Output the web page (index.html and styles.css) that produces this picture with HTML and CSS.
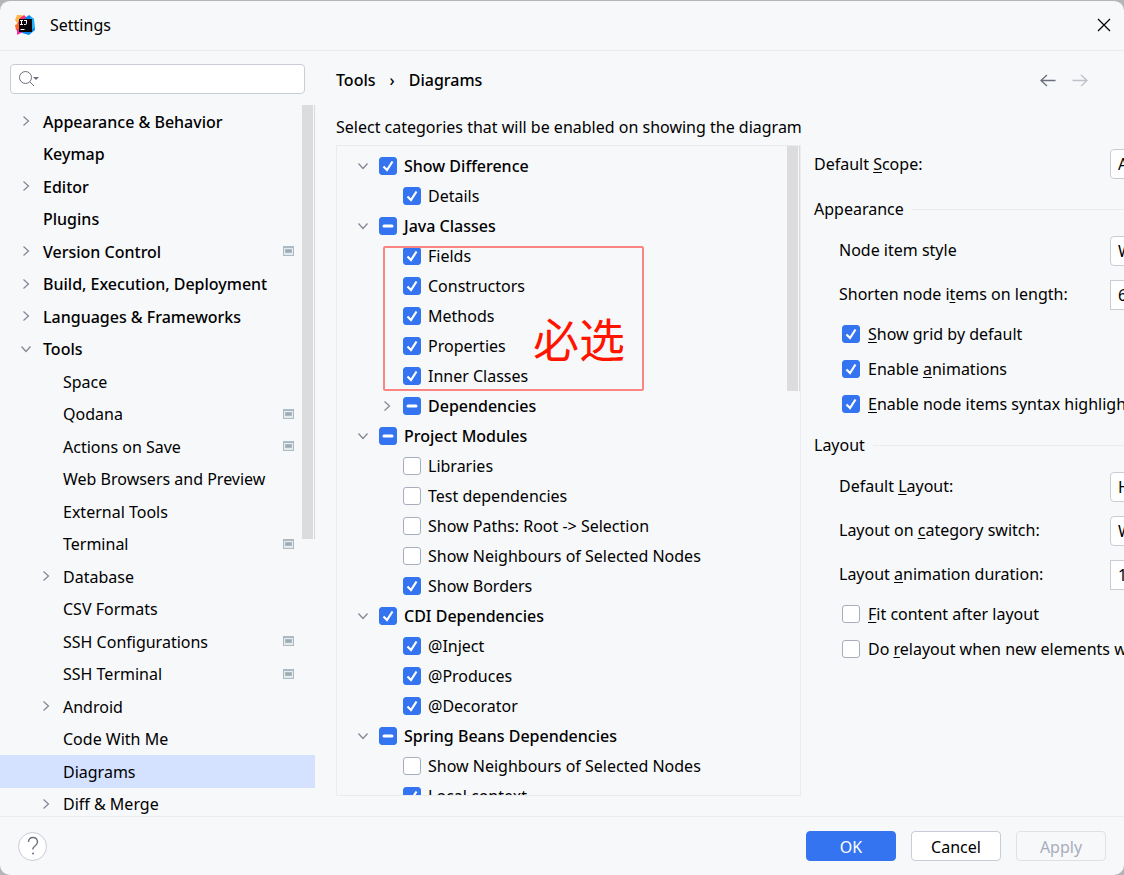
FILE: index.html
```
<!DOCTYPE html>
<html lang="en">
<head>
    <meta charset="UTF-8">
    <meta name="viewport" content="width=device-width, initial-scale=1.0">
    <title>Settings</title>
    <link rel="stylesheet" href="styles.css">
</head>
<body>
    <svg class="sprite" aria-hidden="true">
        <symbol id="right" viewBox="0 0 16 16"><path d="M5.5 3.5l5 4.5-5 4.5" /></symbol>
        <symbol id="down" viewBox="0 0 16 16"><path d="M3.5 5.5l4.5 5 4.5-5" /></symbol>
        <symbol id="project" viewBox="0 0 11 10">
            <rect width="11" height="10" fill="#aebac1" />
            <rect x="1" y="2" width="9" height="7" fill="#e4eaed" />
            <rect x="2" y="3" width="7" height="4" fill="#aebac1" />
            <rect x="3" y="4" width="5" height="2" fill="#9caab2" />
        </symbol>
    </svg>

    <div class="window">
        <header class="titlebar">
            <svg class="logo" viewBox="0 0 20 20">
                <path d="M0 5l2-5h5l2 5-4 7-5-1 2-3z" fill="#ffb84a" />
                <path d="M5 3l4-3 4 4-6 8-6 2 2-6z" fill="#fe2d7c" />
                <path d="M0 10l4-1 6 6-2 3-7-3z" fill="#ff6a2b" />
                <path d="M2 14l4 0 5 3-5 1-4 2z" fill="#f02fa8" />
                <path d="M10 3l4-3 5 4 1 11-6 5-7-2z" fill="#0a86f6" />
                <path d="M15 2l4 2v9l-3 2z" fill="#17b4fa" />
                <rect x="4" y="4" width="13" height="13" fill="#0b0509" />
                <path d="M5 5.500h3M6.500 5.500v4M5 9.500h3M9 5.500h3M11.500 5.500v3q0 1-1 1H9M5.500 14.500h4" fill="none" stroke="#fff" />
            </svg>
            <h1>Settings</h1>
            <button class="icon-btn close" aria-label="Close">
                <svg viewBox="0 0 14 14"><path d="M1 1l12 12M13 1L1 13" /></svg>
            </button>
        </header>

        <div class="content">
            <aside class="sidebar">
                <div class="search">
                    <svg viewBox="0 0 22 18">
                        <circle cx="7.500" cy="7.500" r="6" fill="none" stroke="#6c707e" />
                        <path d="M12 12l4 4" stroke="#6c707e" />
                        <path d="M15 7h6l-3 3z" fill="#6c707e" />
                    </svg>
                    <input type="text" aria-label="Search settings">
                </div>
                <div class="nav-wrap">
                    <ul class="nav">
                        <li class="group"><svg class="chevron"><use href="#right" /></svg><a href="#">Appearance &amp; Behavior</a></li>
                        <li class="group"><span class="chevron"></span><a href="#">Keymap</a></li>
                        <li class="group"><svg class="chevron"><use href="#right" /></svg><a href="#">Editor</a></li>
                        <li class="group"><span class="chevron"></span><a href="#">Plugins</a></li>
                        <li class="group"><svg class="chevron"><use href="#right" /></svg><a href="#">Version Control</a><svg class="project"><use href="#project" /></svg></li>
                        <li class="group"><svg class="chevron"><use href="#right" /></svg><a href="#">Build, Execution, Deployment</a></li>
                        <li class="group"><svg class="chevron"><use href="#right" /></svg><a href="#">Languages &amp; Frameworks</a></li>
                        <li class="group"><svg class="chevron"><use href="#down" /></svg><a href="#">Tools</a></li>
                        <li class="child"><span class="chevron"></span><a href="#">Space</a></li>
                        <li class="child"><span class="chevron"></span><a href="#">Qodana</a><svg class="project"><use href="#project" /></svg></li>
                        <li class="child"><span class="chevron"></span><a href="#">Actions on Save</a><svg class="project"><use href="#project" /></svg></li>
                        <li class="child"><span class="chevron"></span><a href="#">Web Browsers and Preview</a></li>
                        <li class="child"><span class="chevron"></span><a href="#">External Tools</a></li>
                        <li class="child"><span class="chevron"></span><a href="#">Terminal</a><svg class="project"><use href="#project" /></svg></li>
                        <li class="child"><svg class="chevron"><use href="#right" /></svg><a href="#">Database</a></li>
                        <li class="child"><span class="chevron"></span><a href="#">CSV Formats</a></li>
                        <li class="child"><span class="chevron"></span><a href="#">SSH Configurations</a><svg class="project"><use href="#project" /></svg></li>
                        <li class="child"><span class="chevron"></span><a href="#">SSH Terminal</a><svg class="project"><use href="#project" /></svg></li>
                        <li class="child"><svg class="chevron"><use href="#right" /></svg><a href="#">Android</a></li>
                        <li class="child"><span class="chevron"></span><a href="#">Code With Me</a></li>
                        <li class="child selected"><span class="chevron"></span><a href="#">Diagrams</a></li>
                        <li class="child"><svg class="chevron"><use href="#right" /></svg><a href="#">Diff &amp; Merge</a></li>
                    </ul>
                    <div class="scrollbar nav-scroll"></div>
                </div>
            </aside>

            <main class="page">
                <div class="page-head">
                    <nav class="breadcrumb">
                        <a href="#">Tools</a>
                        <span>›</span>
                        <a href="#">Diagrams</a>
                    </nav>
                    <div class="history">
                        <button class="icon-btn" aria-label="Back"><svg viewBox="0 0 16 16"><path d="M15.500 8.500H1M7 3L1 8.500 7 14" /></svg></button>
                        <button class="icon-btn" aria-label="Forward" disabled><svg viewBox="0 0 16 16"><path d="M.5 8.500H15M9 3l6 5.500L9 14" /></svg></button>
                    </div>
                </div>

                <p class="intro">Select categories that will be enabled on showing the diagram</p>

                <div class="columns">
                    <div class="tree-box">
                        <ul class="tree">
                            <li class="root"><svg class="chevron"><use href="#down" /></svg><label><input type="checkbox" checked>Show Difference</label></li>
                            <li class="leaf"><label><input type="checkbox" checked>Details</label></li>
                            <li class="root"><svg class="chevron"><use href="#down" /></svg><label><input type="checkbox" class="mixed">Java Classes</label></li>
                            <li class="leaf"><label><input type="checkbox" checked>Fields</label></li>
                            <li class="leaf"><label><input type="checkbox" checked>Constructors</label></li>
                            <li class="leaf"><label><input type="checkbox" checked>Methods</label></li>
                            <li class="leaf"><label><input type="checkbox" checked>Properties</label></li>
                            <li class="leaf"><label><input type="checkbox" checked>Inner Classes</label></li>
                            <li class="root nested"><svg class="chevron"><use href="#right" /></svg><label><input type="checkbox" class="mixed">Dependencies</label></li>
                            <li class="root"><svg class="chevron"><use href="#down" /></svg><label><input type="checkbox" class="mixed">Project Modules</label></li>
                            <li class="leaf"><label><input type="checkbox">Libraries</label></li>
                            <li class="leaf"><label><input type="checkbox">Test dependencies</label></li>
                            <li class="leaf"><label><input type="checkbox">Show Paths: Root -&gt; Selection</label></li>
                            <li class="leaf"><label><input type="checkbox">Show Neighbours of Selected Nodes</label></li>
                            <li class="leaf"><label><input type="checkbox" checked>Show Borders</label></li>
                            <li class="root"><svg class="chevron"><use href="#down" /></svg><label><input type="checkbox" checked>CDI Dependencies</label></li>
                            <li class="leaf"><label><input type="checkbox" checked>@Inject</label></li>
                            <li class="leaf"><label><input type="checkbox" checked>@Produces</label></li>
                            <li class="leaf"><label><input type="checkbox" checked>@Decorator</label></li>
                            <li class="root"><svg class="chevron"><use href="#down" /></svg><label><input type="checkbox" class="mixed">Spring Beans Dependencies</label></li>
                            <li class="leaf"><label><input type="checkbox">Show Neighbours of Selected Nodes</label></li>
                            <li class="leaf"><label><input type="checkbox" checked>Local context</label></li>
                        </ul>
                        <div class="scrollbar tree-scroll"></div>
                        <div class="note" lang="zh-CN">必选</div>
                    </div>

                    <form class="options">
                        <div class="field scope">
                            <label for="scope">Default <u>S</u>cope:</label>
                            <select id="scope"><option>All</option></select>
                        </div>

                        <h2>Appearance</h2>
                        <div class="section">
                            <div class="field">
                                <label for="node-style">Node item style</label>
                                <select id="node-style"><option>With icons</option></select>
                            </div>
                            <div class="field">
                                <label for="shorten">Shorten node i<u>t</u>ems on length:</label>
                                <input type="text" id="shorten" value="60">
                            </div>
                            <label class="check"><input type="checkbox" checked><span><u>S</u>how grid by default</span></label>
                            <label class="check"><input type="checkbox" checked><span>Enable <u>a</u>nimations</span></label>
                            <label class="check"><input type="checkbox" checked><span><u>E</u>nable node items syntax highlighting</span></label>
                        </div>

                        <h2>Layout</h2>
                        <div class="section">
                            <div class="field">
                                <label for="layout">Default <u>L</u>ayout:</label>
                                <select id="layout"><option>Hierarchic</option></select>
                            </div>
                            <div class="field">
                                <label for="switch">Layout on <u>c</u>ategory switch:</label>
                                <select id="switch"><option>Whole graph</option></select>
                            </div>
                            <div class="field">
                                <label for="duration">Layout <u>a</u>nimation duration:</label>
                                <input type="text" id="duration" value="100">
                            </div>
                            <label class="check"><input type="checkbox"><span><u>F</u>it content after layout</span></label>
                            <label class="check"><input type="checkbox"><span>Do <u>r</u>elayout when new elements were added</span></label>
                        </div>
                    </form>
                </div>
            </main>
        </div>

        <footer class="footer">
            <button class="help" aria-label="Help">
                <svg viewBox="0 0 12 20"><path d="M1.500 6Q1.500 1.500 6 1.500T10.500 6Q10.500 8 8 10T6 13.500" fill="none" stroke="#6c707e" stroke-width="1.400" /><circle cx="6" cy="17.500" r="1" fill="#6c707e" /></svg>
            </button>
            <div class="actions">
                <button class="btn primary">OK</button>
                <button class="btn">Cancel</button>
                <button class="btn" disabled>Apply</button>
            </div>
        </footer>
    </div>

    <script>
        document.querySelectorAll('.mixed').forEach(box => {
            box.indeterminate = true;
        });
    </script>
</body>
</html>
```
FILE: styles.css
```
* {
    box-sizing: border-box;
}
body {
    margin: 0;
    height: 100vh;
    overflow: hidden;
    background-color: #b4b5b8;
    font-family: "Noto Sans", "Open Sans", "Noto Sans CJK SC", sans-serif;
    font-size: 16px;
    line-height: 24px;
    color: #000;
}
ul {
    list-style: none;
    margin: 0;
    padding: 0;
}
a {
    color: inherit;
    text-decoration: none;
}
input, select, button {
    font: inherit;
    color: inherit;
    margin: 0;
}
u {
    text-underline-offset: 2px;
    text-decoration-thickness: 1px;
    text-decoration-skip-ink: none;
}
.sprite {
    display: none;
}
.window {
    display: flex;
    flex-direction: column;
    height: 100vh;
    border-top: 1px solid #b4b5b8;
    border-radius: 10px;
    background-color: #f7f8fa;
    overflow: hidden;
}

/* title bar */
.titlebar {
    display: flex;
    align-items: center;
    gap: 15px;
    height: 50px;
    padding: 0 13px 2px 15px;
    border-bottom: 1px solid #ebecf0;
}
.titlebar h1 {
    flex: 1;
    margin: 0;
    font-size: 16px;
    font-weight: 400;
}
.logo {
    width: 20px;
    height: 20px;
}
.icon-btn {
    display: flex;
    padding: 0;
    border: none;
    background: none;
}
.icon-btn svg {
    width: 16px;
    height: 16px;
    fill: none;
    stroke: #6c707e;
    stroke-width: 1.3;
}
.icon-btn:disabled {
    opacity: 0.4;
}
.icon-btn.close svg {
    width: 14px;
    height: 14px;
    stroke: #000;
    stroke-width: 1.2;
}
.content {
    display: flex;
    flex: 1;
    min-height: 0;
}

/* left navigation */
.sidebar {
    display: flex;
    flex-direction: column;
    flex: 0 0 315px;
}
.search {
    display: flex;
    align-items: center;
    gap: 4px;
    height: 30px;
    margin: 13px 10px 11px;
    padding: 0 8px 0 7px;
    border: 1px solid #c9ccd6;
    border-radius: 4px;
    background-color: #fff;
}
.search svg {
    flex: none;
    width: 22px;
    height: 18px;
}
.search input {
    flex: 1;
    min-width: 0;
    border: none;
    outline: none;
    background: none;
}
.nav-wrap {
    position: relative;
    display: flex;
    flex: 1;
    min-height: 0;
    overflow: hidden;
}
.nav {
    flex: 1;
    display: grid;
    grid-auto-rows: 1fr;
    margin-bottom: -4px;
}
.nav li {
    display: flex;
    align-items: center;
    gap: 9px;
    min-height: 0;
    padding: 0 21px 0 18px;
}
.nav li.child {
    padding-left: 38px;
}
.nav a {
    flex: 1;
    padding-top: 1px;
    white-space: nowrap;
}
.group {
    font-weight: 500;
}
.nav .selected {
    background-color: #d4e2ff;
}
.chevron {
    flex: none;
    width: 16px;
    height: 16px;
    fill: none;
    stroke: #818594;
    stroke-width: 1.2;
}
.project {
    width: 11px;
    height: 10px;
}
.scrollbar {
    position: absolute;
    top: 0;
    width: 11px;
    background-color: #dcdcde;
}
.nav-scroll {
    right: 2px;
    height: 61%;
    box-shadow: 1px 0 #f7f8fa, 2px 0 #d8d9dd;
}

/* settings page */
.page {
    display: flex;
    flex-direction: column;
    flex: 1;
    min-width: 0;
    padding: 17px 0 20px 21px;
}
.page-head {
    display: flex;
    justify-content: space-between;
    padding-right: 36px;
}
.breadcrumb {
    display: flex;
    gap: 14px;
    font-weight: 500;
}
.history {
    display: flex;
    align-items: center;
    gap: 16px;
}
.intro {
    margin: 23px 0 6px;
    white-space: nowrap;
}
.columns {
    display: flex;
    flex: 1;
    gap: 13px;
    min-height: 0;
    overflow: hidden;
}
.tree-box {
    position: relative;
    flex: 0 0 465px;
    padding-top: 5px;
    border: 1px solid #ebecf0;
    overflow: hidden;
}
.tree li {
    display: flex;
    align-items: center;
    gap: 8px;
    height: 30px;
    padding-left: 18px;
}
.tree .root {
    font-weight: 500;
}
.tree .nested {
    padding-left: 42px;
}
.tree .leaf {
    padding-left: 66px;
}
.tree label {
    display: flex;
    align-items: center;
    gap: 7px;
}
.tree-scroll {
    right: 2px;
    height: 245px;
    box-shadow: 1px 0 #f7f8fa, 2px 0 #d8d9dd;
}
.note {
    position: absolute;
    top: 100px;
    left: 46px;
    display: flex;
    align-items: center;
    justify-content: flex-end;
    width: 261px;
    height: 145px;
    padding: 36px 17px 0 0;
    border: 2px solid #fb8580;
    border-radius: 2px;
    font-family: "Noto Sans CJK SC", sans-serif;
    font-size: 46px;
    line-height: 46px;
    color: #ff1400;
    pointer-events: none;
}
input[type="checkbox"] {
    appearance: none;
    flex: none;
    width: 18px;
    height: 18px;
    border: 1px solid #a8adbd;
    border-radius: 3px;
    background: #fff center no-repeat;
}
input[type="checkbox"]:checked,
input[type="checkbox"]:indeterminate {
    border-color: #3574f0;
    background-color: #3574f0;
}
input[type="checkbox"]:checked {
    background-image: url("data:image/svg+xml,%3Csvg xmlns='http://www.w3.org/2000/svg' width='16' height='16'%3E%3Cpath d='M3.500 8.500l3.500 3.500 5.500-8.500' fill='none' stroke='white' stroke-width='2.200'/%3E%3C/svg%3E");
}
input[type="checkbox"]:indeterminate {
    background-image: url("data:image/svg+xml,%3Csvg xmlns='http://www.w3.org/2000/svg' width='16' height='16'%3E%3Cpath d='M4 8h8' stroke='white' stroke-width='3' stroke-linecap='round'/%3E%3C/svg%3E");
}

/* right column */
.options {
    flex: 1;
    min-width: 0;
    padding-top: 4px;
    white-space: nowrap;
}
.options h2 {
    display: flex;
    align-items: center;
    gap: 8px;
    margin: 12px 0 15px;
    font-size: 16px;
    font-weight: 400;
}
.options h2::after {
    content: "";
    flex: 1;
    border-top: 1px solid #ebecf0;
}
.section {
    padding-left: 25px;
}
.field {
    display: grid;
    grid-template-columns: 271px 180px;
    align-items: center;
    margin-bottom: 14px;
}
.section .field label {
    padding-bottom: 2px;
}
.scope {
    grid-template-columns: 296px 180px;
    margin-bottom: 18px;
}
.field input, .field select {
    height: 30px;
    padding: 0 7px;
    border: 1px solid #c9ccd6;
    background-color: #fff;
}
.field select {
    appearance: none;
    border-radius: 4px;
}
.check {
    display: flex;
    align-items: center;
    gap: 8px;
    height: 35px;
    padding-left: 3px;
}
.field + .check {
    margin-top: -8px;
}

/* bottom bar */
.footer {
    display: flex;
    align-items: center;
    justify-content: space-between;
    height: 59px;
    padding: 0 18px;
    border-top: 1px solid #ebecf0;
}
.help {
    display: flex;
    align-items: center;
    justify-content: center;
    width: 29px;
    height: 29px;
    padding: 0;
    border: 1px solid #c9ccd6;
    border-radius: 50%;
    background-color: #fff;
}
.help svg {
    width: 12px;
    height: 20px;
}
.actions {
    display: flex;
    gap: 15px;
}
.btn {
    width: 90px;
    height: 30px;
    padding: 1px 0 0;
    border: 1px solid #c9ccd6;
    border-radius: 4px;
    background-color: #fff;
}
.btn.primary {
    border-color: #3574f0;
    background-color: #3574f0;
    color: #fff;
}
.btn:disabled {
    border-color: #dfe1e5;
    background-color: #f7f8fa;
    color: #a8adbd;
}
```
